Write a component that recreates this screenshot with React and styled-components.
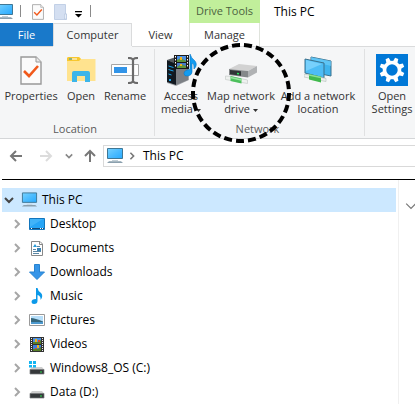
import React, { Fragment } from "react";
import styled, { createGlobalStyle, css } from "styled-components";

const GlobalStyle = createGlobalStyle`
  *, *::before, *::after { box-sizing: border-box; }
  body { margin: 0; background: #fff; overflow-x: hidden; }
  button { font: inherit; color: inherit; border: 0; padding: 0; background: none; cursor: pointer; }
  svg { display: block; flex: none; }
`;

const Window = styled.main`
  font-family: "Open Sans", "Noto Sans", sans-serif;
  font-size: 12px;
  line-height: 16px;
  color: #000;
  background: #fff;
  overflow: hidden;
`;

const TabStrip = styled.header`
  display: grid;
  grid-template-columns: 53px 79px 57px 71px 1fr;
  grid-template-rows: 23px 23px;
  font-size: 11px;
  white-space: nowrap;
`;

const QuickAccess = styled.div`
  grid-column: 1 / 4;
  display: flex;
  align-items: center;
  padding-top: 1px;
`;

const QuickButton = styled.button`
  display: flex;
  justify-content: center;
  width: ${(p) => p.$width}px;
  margin-left: ${(p) => p.$gap || 0}px;
`;

const QuickDivider = styled.span`
  width: 1px;
  height: 12px;
  margin: 0 0 2px ${(p) => p.$gap}px;
  background: #8a8a8a;
`;

const ContextLabel = styled.div`
  display: flex;
  align-items: center;
  justify-content: center;
  padding-bottom: 2px;
  background: #c1ef9b;
  color: #4c5f3f;
`;

const WindowTitle = styled.h1`
  margin: 0;
  padding: 4px 0 0 14px;
  font-size: 12px;
  font-weight: 400;
`;

const Tab = styled.button`
  color: #333;
  ${(p) =>
    p.$kind === "file" &&
    css`
      background: #1979ca;
      color: #fff;
    `}
  ${(p) =>
    p.$kind === "active" &&
    css`
      background: #f5f6f7;
      border: 1px solid #dadbdc;
      border-bottom: 0;
    `}
  ${(p) =>
    p.$kind === "context" &&
    css`
      border: solid #dfe3dc;
      border-width: 0 1px;
    `}
`;

const Ribbon = styled.section`
  display: flex;
  height: 92px;
  font-size: 11px;
  background: #f5f6f7;
  border-bottom: 1px solid #d4d6d8;
`;

const RibbonEdge = styled.div`
  display: grid;
  grid-template-columns: 53px 79px 1fr;
  height: 1px;
  background: #dadbdc;
  &::before {
    content: "";
    grid-column: 2;
    background: #f5f6f7;
  }
`;

const Group = styled.div`
  display: flex;
  flex-direction: column;
  flex: none;
  width: ${(p) => p.$width}px;
  padding-top: 5px;
  border-right: 1px solid #e2e3e4;
  border-image: linear-gradient(#f5f6f7 3px, #e0e1e2 3px, #e0e1e2 88px, #f5f6f7 88px) 1;
`;

const GroupItems = styled.div`
  display: flex;
  flex: 1;
  padding-left: ${(p) => p.$inset}px;
`;

const GroupName = styled.div`
  height: 17px;
  padding-right: 4px;
  text-align: center;
  color: #5a5a5a;
`;

const Command = styled.button`
  position: relative;
  display: flex;
  flex-direction: column;
  align-items: center;
  flex: none;
  width: ${(p) => p.$width}px;
  color: #333;
  line-height: 13px;
  white-space: nowrap;
`;

const CommandIcon = styled.span`
  display: flex;
  align-items: center;
  height: 36px;
  margin-bottom: 1px;
`;

const CommandLabel = styled.span`
  text-align: center;
  svg {
    display: inline-block;
    margin-left: 3px;
    vertical-align: middle;
  }
`;

const Highlight = styled.svg`
  position: absolute;
  left: 50%;
  top: -10px;
  margin-left: -51px;
  pointer-events: none;
  z-index: 1;
`;

const NavBar = styled.nav`
  display: flex;
  align-items: center;
  padding: 6px 0 12px 9px;
`;

const NavButton = styled.button`
  display: flex;
  justify-content: center;
  width: ${(p) => p.$width}px;
  margin-right: ${(p) => p.$gap}px;
`;

const Address = styled.div`
  display: flex;
  align-items: center;
  flex: 1;
  gap: 4px;
  height: 22px;
  padding-left: 2px;
  border: 1px solid #d9d9d9;
  border-right: 0;
`;

const Crumb = styled.button`
  margin-left: 3px;
`;

const Rule = styled.hr`
  height: 1px;
  margin: 0 0 0 2px;
  border: 0;
  background: #000;
`;

const Body = styled.div`
  display: flex;
`;

const Tree = styled.ul`
  flex: 1;
  margin: 0;
  padding: 8px 2px 0 2px;
  list-style: none;
  border-right: 1px solid #f0f0f0;
`;

const TreeRow = styled.li`
  display: flex;
  align-items: center;
  height: 24px;
  padding-left: ${(p) => (p.$root ? 2 : 10)}px;
  background: ${(p) => (p.$root ? "#cce8ff" : "transparent")};
`;

const Toggle = styled.button`
  display: flex;
  justify-content: center;
  width: 9px;
  margin-right: 8px;
`;

const TreeIcon = styled.span`
  display: flex;
  justify-content: center;
  width: 16px;
  margin-right: 5px;
`;

const Side = styled.aside`
  flex: none;
  width: 16px;
  padding: 20px 0 0 6px;
`;

const Screen = ({ w = 18, h = 16 }) => (
  <svg width={w} height={h} viewBox="0 0 18 16">
    <defs>
      <linearGradient id="glass" x1="0" y1="0" x2="1" y2="1">
        <stop offset="0" stopColor="#76d2ff" />
        <stop offset=".5" stopColor="#4cbcff" />
        <stop offset="1" stopColor="#27aaff" />
      </linearGradient>
    </defs>
    <path d="M1.5 .5h15v10h-15z" fill="url(#glass)" stroke="#3f7795" />
    <path d="M6 12h6v1H6z" fill="#c3d0d8" />
    <path d="M3 13.2h12l2 1.8H1z" fill="#8ba0ae" />
  </svg>
);

const CheckedPage = ({ w, h }) => (
  <svg width={w} height={h} viewBox="0 0 22 29">
    <path d="M1 1h15l5 5v22H1z" fill="#fbfbfb" stroke="#999" strokeWidth="1.4" />
    <path d="M16 1v5h5" fill="#e9e9e9" stroke="#999" />
    <path d="m4 15 5 5 9-10" fill="none" stroke="#f1591b" strokeWidth="2.6" />
  </svg>
);

const PaleFolder = () => (
  <svg width="14" height="16" viewBox="0 0 14 16">
    <path d="M.5.5h11V10h1v5.5H.5z" fill="#d4dff1" stroke="#c2d0e6" />
    <path d="M10.5 10h2v5h-2z" fill="#e6edf8" stroke="#b4c4de" strokeWidth=".6" />
  </svg>
);

const Menu = () => (
  <svg width="7" height="11" viewBox="0 0 7 11">
    <path d="M0 4h7v1.3H0zM0 7h7L3.5 10.5z" fill="#000" />
  </svg>
);

const OpenFolder = () => (
  <svg width="29" height="26" viewBox="0 0 29 26">
    <path d="M0 1.5Q0 0 1.5 0H12l2 2h14.5v22H0z" fill="#ffe38f" />
    <path d="M0 1.5Q0 0 1.5 0H12l2 2-2 2H0z" fill="#f7c72f" />
    <path d="M2 1.5h3v1H2z" fill="#2498d6" />
    <path d="M5 1.5h5v1H5z" fill="#fff" />
    <path d="M5 25V16q0-2 2-2h14q2 0 2 2v9h-5v-6h-8v6z" fill="#3cb5e9" />
  </svg>
);

const RenameBox = () => (
  <svg width="28" height="27" viewBox="0 0 28 27">
    <path d="M.5 7.5h27v11H.5z" fill="#fff" stroke="#a6a6a6" />
    <path d="M3 10h13v6H3z" fill="#3294e8" />
    <path d="M17 1q4.5 0 5 2 .5-2 5-2M17 26q4.5 0 5-2 .5 2 5 2M22 2v23" fill="none" stroke="#6b6b6b" strokeWidth="2.2" />
  </svg>
);

const MediaServer = () => (
  <svg width="32" height="32" viewBox="0 0 32 32">
    <path d="m2 7 9-2 13 3v18l-13 6-9-3z" fill="#a3a6aa" />
    <path d="m2 6 9 3v22l-9-3z" fill="#111920" />
    <path d="m11 9 12-2v19l-12 5z" fill="#7c8085" />
    <path d="m2 6 9-3 12 4-12 3z" fill="#555a5e" />
    <path d="m3.5 12 5 1.5m-5 2 5 1.5m-5 3 3 1" stroke="#1aa5ec" />
    <path d="M4 25h2v2H4z" fill="#1aa5ec" />
    <path d="M9 1h15v14H9z" fill="#1b1b1b" />
    <path d="M12 2h9v6h-9z" fill="#4c8fe3" />
    <path d="M12 9h9v5h-9z" fill="#477ad0" />
    <path d="m12 6 4-2 5 3v1h-9zm0 7 4-3 5 2v2h-9z" fill="#5f943e" />
    <path d="M15 3h2v3h-2zm0 7h2v2h-2z" fill="#f0b21d" />
    <path d="M10.5 2v12M22.5 2v12" stroke="#fff" strokeDasharray="1.5 1.5" />
    <path d="M25 0q1 4 5 7 3 4-1 8 .5-5-2-6v9q0 3-4 4-4 .5-4-2.5 0-3.500 6-4z" fill="#139cf0" stroke="#0877c7" strokeWidth=".6" />
  </svg>
);

const NetworkDrive = () => (
  <svg width="33" height="32" viewBox="0 -10 33 32">
    <path d="m4 5 10-5 18 2-9 5z" fill="#d2d2d2" />
    <path d="m23 7 9-5v6.5l-9 5z" fill="#b0b2b4" />
    <path d="m4 5 19 2v6.500L4 11z" fill="#85888a" />
    <path d="m5 6 11 1.300v4.500L5 10.200z" fill="#303436" />
    <path d="m12 9.500 2 .3" stroke="#2ce45f" strokeWidth="1.500" />
    <path d="m.5 12 6 .5 16 3.500v3.500L.5 15.500z" fill="#eef1ef" stroke="#c5cbc8" strokeWidth=".7" />
    <path d="m5.500 12 11 2.500v5l-11-2.500z" fill="#4cc05c" />
    <path d="m5.500 13.500 11 2.500" stroke="#9ae6a2" strokeWidth="1.500" />
  </svg>
);

const NetworkPlace = () => (
  <svg width="29" height="28" viewBox="0 0 29 28">
    <path d="m7 1 20 4v15L7 16z" fill="#3fb4ee" stroke="#3b718d" />
    <path d="m7 1 20 4v5L7 5z" fill="#73d0fc" opacity=".6" />
    <path d="m1 3 19 4v15L1 17z" fill="#4dbcf5" stroke="#3b718d" />
    <path d="m2 4 16 4L2 15z" fill="#8ddaff" opacity=".65" />
    <path d="m0 18 22 4.500v3L0 21z" fill="#edf0ee" stroke="#b8c5bf" strokeWidth=".7" />
    <path d="m5 18 12 2.500v6L5 23.500z" fill="#40b94d" />
    <path d="m5 19 12 2.500" stroke="#8bdc94" strokeWidth="1.5" />
  </svg>
);

const teeth = [0, 45, 90, 135, 180, 225, 270, 315];
const SettingsTile = () => (
  <svg width="32" height="32" viewBox="0 0 32 32">
    <path d="M0 0h32v32H0z" fill="#0078d7" />
    {teeth.map((a) => (
      <path key={a} d="M13.5 8l.8-4.500h3.400l.8 4.500z" fill="#fff" transform={`rotate(${a + 22} 16 16)`} />
    ))}
    <circle cx="16" cy="16" r="7.500" fill="none" stroke="#fff" strokeWidth="3.600" />
  </svg>
);

const Caret = () => (
  <svg width="5" height="3" viewBox="0 0 5 3">
    <path d="M0 0h5L2.5 3z" fill="#333" />
  </svg>
);

const Arrow = ({ turn = 0, color = "#777" }) => (
  <svg width="14" height="14" viewBox="0 0 14 14">
    <path d="M13 7H2M7 2 2 7l5 5" fill="none" stroke={color} strokeWidth="2" transform={`rotate(${turn} 7 7)`} />
  </svg>
);

const Chevron = ({ turn = 0, color = "#a6a6a6", size = 10, weight = 2 }) => (
  <svg width={size} height={size} viewBox="0 0 10 10">
    <path d="m3 1 4 4-4 4" fill="none" stroke={color} strokeWidth={weight} transform={`rotate(${turn} 5 5)`} />
  </svg>
);

const DesktopIcon = () => (
  <svg width="16" height="12" viewBox="0 0 16 12">
    <path d="M.5.5h15v11H.5z" fill="#26a5f6" stroke="#1376bd" />
    <path d="M1 1h13L1 9z" fill="#54bdfa" opacity=".6" />
    <path d="M1 10h14v1H1z" fill="#164a75" />
    <path d="M2 10h1v1H2zm9 0h1v1h-1zm2 0h1v1h-1z" fill="#fff" />
  </svg>
);

const DocumentIcon = () => (
  <svg width="12" height="15" viewBox="0 0 12 15">
    <path d="M.5.5H9L11.5 3v11.500H.5z" fill="#fff" stroke="#888" />
    <path d="M8.5.5v3h3" fill="none" stroke="#888" />
    <path d="m2 6 2-3 2 3z" fill="#269ad9" />
    <path d="M6 5.5h3M2 8.500h3M2 10.500h8M2 12.500h6" stroke="#5b87a5" />
    <path d="M6 7h4v3H6z" fill="#3c83b3" />
  </svg>
);

const DownloadIcon = () => (
  <svg width="16" height="16" viewBox="0 0 16 16">
    <path d="M5.5.5h5V8h5L8 15.500.5 8h5z" fill="#3595e8" stroke="#2783d1" />
  </svg>
);

const MusicIcon = () => (
  <svg width="12" height="16" viewBox="0 0 12 16">
    <path d="M5 0h1.5q.5 3 3 4.500Q13 7.500 9.500 12q.5-4-3-5v6q0 3-3.500 3-2.500 0-2.500-2Q.5 11 5 11z" fill="#0b99e9" />
  </svg>
);

const PictureIcon = () => (
  <svg width="16" height="12" viewBox="0 0 16 12">
    <path d="M.5.5h15v11H.5z" fill="#fff" stroke="#999" />
    <path d="M2 2h12v8H2z" fill="#b7dffa" />
    <path d="M2 4q4 0 12 3.500V10H2z" fill="#35667b" />
    <path d="M2 8h12v2H2z" fill="#4c99ce" />
  </svg>
);

const VideoIcon = () => (
  <svg width="14" height="15" viewBox="0 0 14 15">
    <path d="M0 0h14v15H0z" fill="#333" />
    <path d="M3 1h8v6H3z" fill="#4e91e2" />
    <path d="M3 8h8v6H3z" fill="#3e7edb" />
    <path d="M3 5h5l3-2v4H3zm0 7h5l3-2v4H3z" fill="#587f29" />
    <path d="M5 2h2v3H5zm2 6h2v3H7z" fill="#efb51a" />
    <path d="M8 3h2v2H8zm-3 8h2v1H5z" fill="#d44b37" />
    <path d="M1.5 1v13M12.5 1v13" stroke="#eee" strokeDasharray="1 1" />
  </svg>
);

const DiskIcon = ({ system }) => (
  <svg width="16" height="14" viewBox="0 0 16 14">
    <path d="M3 6h10l2.5 3H.5z" fill="#cfcfcf" />
    <path d="M1 8.5h14v4.500H1z" fill="#35383a" stroke="#77797b" strokeWidth=".7" />
    <path d="M11 10.5h2v1h-2z" fill="#2de04f" />
    {system && <path d="M0 0h3v3H0zm4 0h3v3H4zM0 4h3v2.500H0zm4 0h3v2.500H4z" fill="#12b5f2" />}
  </svg>
);

const folders = [
  ["Desktop", <DesktopIcon />],
  ["Documents", <DocumentIcon />],
  ["Downloads", <DownloadIcon />],
  ["Music", <MusicIcon />],
  ["Pictures", <PictureIcon />],
  ["Videos", <VideoIcon />],
  ["Windows8_OS (C:)", <DiskIcon system />],
  ["Data (D:)", <DiskIcon />],
];

const RibbonCommand = ({ icon, lines, width, menu, children }) => (
  <Command $width={width}>
    <CommandIcon>{icon}</CommandIcon>
    <CommandLabel>
      {lines.map((line, i) => (
        <Fragment key={line}>
          {i > 0 && <br />}
          {line}
        </Fragment>
      ))}
      {menu && <Caret />}
    </CommandLabel>
    {children}
  </Command>
);

export default function App() {
  return (
    <Window>
      <GlobalStyle />
      <TabStrip>
        <QuickAccess>
          <QuickButton $width={18} $gap={-4} aria-label="System menu"><Screen /></QuickButton>
          <QuickDivider $gap={6} />
          <QuickButton $width={12} $gap={11} aria-label="Properties"><CheckedPage w={12} h={16} /></QuickButton>
          <QuickButton $width={14} $gap={10} aria-label="New folder"><PaleFolder /></QuickButton>
          <QuickButton $width={7} $gap={7} aria-label="Customize toolbar"><Menu /></QuickButton>
          <QuickDivider $gap={8} />
        </QuickAccess>
        <ContextLabel>Drive Tools</ContextLabel>
        <WindowTitle>This PC</WindowTitle>
        <Tab $kind="file">File</Tab>
        <Tab $kind="active">Computer</Tab>
        <Tab>View</Tab>
        <Tab $kind="context">Manage</Tab>
      </TabStrip>
      <RibbonEdge />
      <Ribbon>
        <Group $width={155}>
          <GroupItems $inset={1}>
            <RibbonCommand width={60} icon={<CheckedPage w={22} h={29} />} lines={["Properties"]} />
            <RibbonCommand width={40} icon={<OpenFolder />} lines={["Open"]} />
            <RibbonCommand width={48} icon={<RenameBox />} lines={["Rename"]} />
          </GroupItems>
          <GroupName>Location</GroupName>
        </Group>
        <Group $width={210}>
          <GroupItems $inset={4}>
            <RibbonCommand width={44} icon={<MediaServer />} lines={["Access", "media"]} menu />
            <RibbonCommand width={76} icon={<NetworkDrive />} lines={["Map network", "drive"]} menu>
              <Highlight width="102" height="102" viewBox="0 0 102 102">
                <circle cx="51" cy="51" r="48" fill="none" stroke="#000" strokeWidth="4" pathLength="300" strokeDasharray="8 4" />
              </Highlight>
            </RibbonCommand>
            <RibbonCommand width={78} icon={<NetworkPlace />} lines={["Add a network", "location"]} />
          </GroupItems>
          <GroupName>Network</GroupName>
        </Group>
        <Group $width={90}>
          <GroupItems $inset={3}>
            <RibbonCommand width={48} icon={<SettingsTile />} lines={["Open", "Settings"]} />
          </GroupItems>
        </Group>
      </Ribbon>
      <NavBar>
        <NavButton $width={14} $gap={16} aria-label="Back"><Arrow /></NavButton>
        <NavButton $width={14} $gap={11} aria-label="Forward"><Arrow turn={180} color="#dcdcdc" /></NavButton>
        <NavButton $width={10} $gap={9} aria-label="Recent locations"><Chevron turn={90} color="#888" size={8} /></NavButton>
        <NavButton $width={14} $gap={6} aria-label="Up"><Arrow turn={90} /></NavButton>
        <Address>
          <Screen />
          <Chevron color="#777" size={8} />
          <Crumb>This PC</Crumb>
        </Address>
      </NavBar>
      <Rule />
      <Body>
        <Tree>
          <TreeRow $root>
            <Toggle aria-label="Collapse This PC"><Chevron turn={90} color="#444" /></Toggle>
            <TreeIcon><Screen w={17} h={16} /></TreeIcon>
            This PC
          </TreeRow>
          {folders.map(([name, icon]) => (
            <TreeRow key={name}>
              <Toggle aria-label={`Expand ${name}`}><Chevron /></Toggle>
              <TreeIcon>{icon}</TreeIcon>
              {name}
            </TreeRow>
          ))}
        </Tree>
        <Side><Chevron turn={90} color="#777" size={12} weight={1} /></Side>
      </Body>
    </Window>
  );
}
